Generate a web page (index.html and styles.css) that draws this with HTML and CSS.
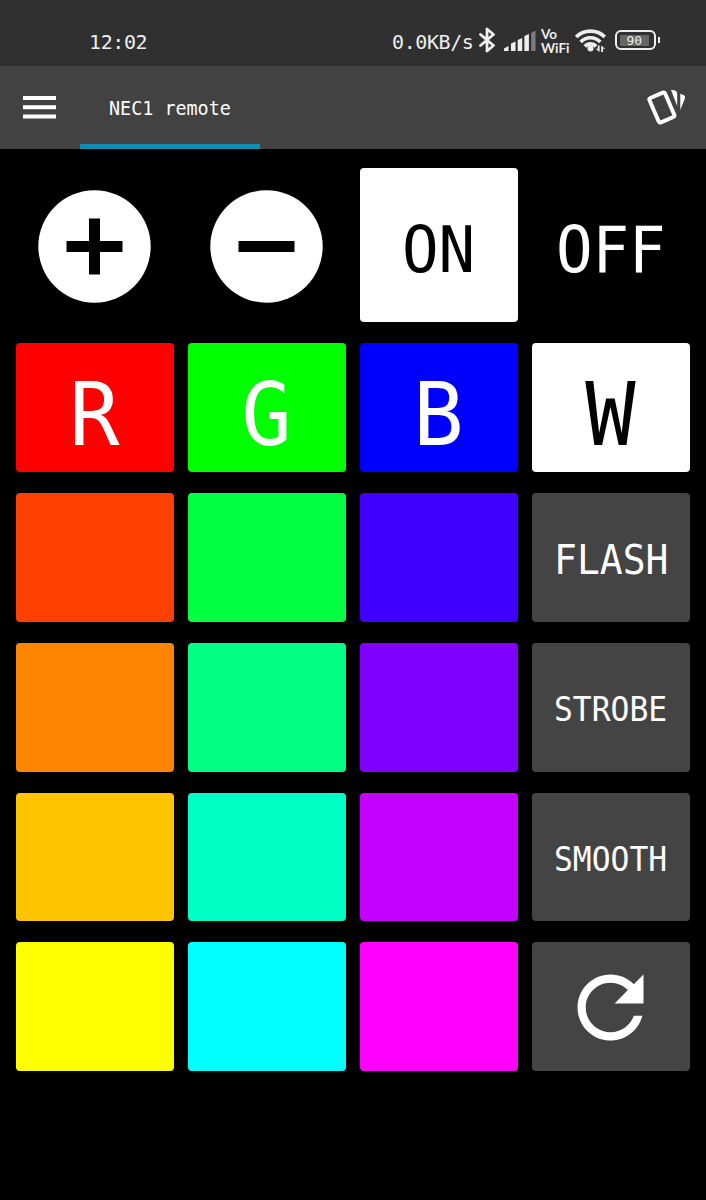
FILE: index.html
```html
<!DOCTYPE html>
<html lang="en">
<head>
    <meta charset="UTF-8">
    <meta name="viewport" content="width=device-width, initial-scale=1.0">
    <title>NEC1 remote</title>
    <link rel="stylesheet" href="styles.css">
</head>
<body>
    <div class="status-bar">
        <span class="clock">12:02</span>
        <div class="status-icons">
            <span class="speed">0.0KB/s</span>
            <svg class="bluetooth" width="18" height="26" viewBox="0 0 18 26">
                <path d="M1.5 7.5L14.500 18.500L8 24V2L14.500 7.500L1.500 18.500" fill="none" stroke="#eee" stroke-width="2.8" stroke-linecap="round" stroke-linejoin="round"/>
            </svg>
            <svg class="signal" width="32" height="20" viewBox="0 0 32 20">
                <path d="M0 20v-2.500l4.500-2.500v5zM7 20v-7.500l4.500-2v9.500zM13.700 20v-11l4.500-2v13zM20.400 20v-15l4.500-2v17z" fill="#eee"/>
                <path d="M27.200 20v-18l3-2h1.300v20z" fill="#7c7c7c"/>
            </svg>
            <div class="vowifi"><span>Vo</span><span>WiFi</span></div>
            <svg class="wifi" width="31" height="23" viewBox="0 0 31 23">
                <g fill="none" stroke="#eee" stroke-width="3.700">
                    <path d="M1.200 8C9 0.200 22 0.200 29.800 8"/>
                    <path d="M5.700 13C11 7.300 20 7.300 25.300 13"/>
                    <path d="M10 17.500C13 14 18 14 21 17.500"/>
                </g>
                <circle cx="15.500" cy="19.400" r="3" fill="#eee"/>
                <path d="M24.600 16.500v6.500l-4-3.200h2.200v-3.300zM26.200 23v-6.500l4 3.200h-2.200v3.300z" fill="#eee"/>
            </svg>
            <div class="battery"><span class="battery-level">90</span></div>
        </div>
    </div>

    <div class="app-bar">
        <svg class="menu" width="33" height="24" viewBox="0 0 33 24">
            <path d="M0 1h33v4H0zM0 10.200h33v4H0zM0 19.500h33v4H0z" fill="#fff"/>
        </svg>
        <div class="tab"><span class="tab-label">NEC1 remote</span></div>
        <svg class="cards" width="40" height="36" viewBox="0 0 40 36">
            <rect x="6.400" y="4.200" width="17" height="26.600" rx="1.800" transform="rotate(-23.500 14.900 17.500)" fill="none" stroke="#fff" stroke-width="3.900"/>
            <path d="M24 0h2.200q4 0.500 4 4v12zM33.300 3.700l3.700 1.600q1.500 1 1 3L33.300 20z" fill="#fff"/>
        </svg>
    </div>

    <div class="remote">
        <div class="key round">
            <svg width="113" height="113" viewBox="0 0 113 113">
                <circle cx="56.500" cy="56.500" r="56.200" fill="#fff"/>
                <path d="M51 28.500h11v22.500h22.500v11H62v22.500H51V62H28.500V51H51z" fill="#000"/>
            </svg>
        </div>
        <div class="key round">
            <svg width="113" height="113" viewBox="0 0 113 113">
                <circle cx="56.500" cy="56.500" r="56.200" fill="#fff"/>
                <path d="M28.500 51h56v11h-56z" fill="#000"/>
            </svg>
        </div>
        <div class="key white"><span class="label medium">ON</span></div>
        <div class="key"><span class="label medium">OFF</span></div>

        <div class="key red"><span class="label large">R</span></div>
        <div class="key green"><span class="label large">G</span></div>
        <div class="key blue"><span class="label large">B</span></div>
        <div class="key white"><span class="label large">W</span></div>

        <div class="key vermilion"></div>
        <div class="key emerald"></div>
        <div class="key indigo"></div>
        <div class="key gray"><span class="label small">FLASH</span></div>

        <div class="key orange"></div>
        <div class="key spring"></div>
        <div class="key violet"></div>
        <div class="key gray"><span class="label tiny">STROBE</span></div>

        <div class="key amber"></div>
        <div class="key turquoise"></div>
        <div class="key purple"></div>
        <div class="key gray"><span class="label tiny">SMOOTH</span></div>

        <div class="key yellow"></div>
        <div class="key cyan"></div>
        <div class="key magenta"></div>
        <div class="key gray refresh">
            <svg width="99" height="99" viewBox="0 0 24 24">
                <path d="M17.650 6.350C16.200 4.900 14.210 4 12 4c-4.420 0-7.990 3.580-7.990 8s3.570 8 7.990 8c3.730 0 6.840-2.550 7.730-6h-2.080c-.82 2.330-3.040 4-5.650 4-3.310 0-6-2.690-6-6s2.690-6 6-6c1.660 0 3.140.69 4.220 1.780L13 11h7V4l-2.350 2.350z" fill="#fff"/>
            </svg>
        </div>
    </div>
</body>
</html>
```

FILE: styles.css
```css
* {
    box-sizing: border-box;
}

body {
    margin: 0;
    height: 1200px;
    background-color: #000;
    color: #fff;
    font-family: "DejaVu Sans Mono", monospace;
    overflow: hidden;
}

svg {
    display: block;
    flex-shrink: 0;
}

.status-bar {
    display: flex;
    justify-content: space-between;
    height: 65.5px;
    padding: 17px 46px 0 89px;
    background-color: #303030;
    color: #eee;
    font-size: 20px;
    line-height: 50px;
}

.clock {
    letter-spacing: -0.4px;
}

.status-icons {
    display: flex;
    align-items: flex-start;
}

.speed {
    width: 87px;
    letter-spacing: -0.4px;
    white-space: nowrap;
}

.bluetooth {
    margin-top: 10px;
}

.signal {
    margin: 14px 0 0 7px;
}

.vowifi {
    display: flex;
    flex-direction: column;
    width: 28px;
    margin: 9.5px 0 0 5px;
    font-family: Lato, sans-serif;
    font-size: 13.5px;
    font-weight: bold;
    line-height: 14px;
}

.vowifi span {
    height: 14px;
}

.wifi {
    margin: 12px 0 0 6px;
}

.battery {
    position: relative;
    width: 41px;
    height: 20px;
    margin: 13px 4px 0 9px;
    padding: 2.5px;
    border: 2.5px solid #eee;
    border-radius: 6px;
}

.battery::after {
    content: "";
    position: absolute;
    top: 5px;
    right: -6px;
    width: 2px;
    height: 6px;
    background-color: #eee;
}

.battery-level {
    display: block;
    width: 29px;
    height: 11px;
    padding-left: 7px;
    background-color: #666;
    font-size: 13px;
    line-height: 12px;
}

.app-bar {
    display: flex;
    height: 83px;
    padding: 0 19px 0 23.5px;
    background-color: #424242;
}

.menu {
    margin: 29.5px 0 0 -0.5px;
}

.tab {
    width: 180px;
    margin-left: 23.5px;
    padding-left: 29px;
    border-bottom: 5.5px solid #0c90ae;
    font-size: 20px;
    line-height: 84px;
}

.tab-label {
    display: block;
    transform: scaleX(0.92);
    transform-origin: left;
    white-space: nowrap;
}

.cards {
    margin: 24.5px 0 0 auto;
}

.remote {
    display: grid;
    grid-template-columns: repeat(4, 1fr);
    grid-template-rows: 154px repeat(5, 128.8px);
    gap: 21px 14.3px;
    padding: 19.7px 16.3px 0 15.9px;
}

.key {
    display: flex;
    align-items: center;
    justify-content: center;
    border-radius: 4px;
}

.round {
    padding-top: 3px;
}

.refresh {
    padding-top: 2px;
}

/* DejaVu is a bit wide for the keys */
.label {
    padding-top: 0.14em;
    line-height: 1;
    transform: scaleX(0.95);
}

.large {
    padding-top: 0.16em;
    font-size: 88px;
}

.medium {
    font-size: 64px;
}

.small {
    font-size: 40px;
}

.tiny {
    font-size: 33px;
}

.white {
    background-color: #fff;
    color: #000;
}

.gray {
    background-color: #444;
}

.red {
    background-color: #ff0000;
}

.green {
    background-color: #00ff00;
}

.blue {
    background-color: #0000ff;
}

.vermilion {
    background-color: #ff4000;
}

.emerald {
    background-color: #00ff40;
}

.indigo {
    background-color: #4000ff;
}

.orange {
    background-color: #ff8400;
}

.spring {
    background-color: #00ff84;
}

.violet {
    background-color: #8000ff;
}

.amber {
    background-color: #ffc400;
}

.turquoise {
    background-color: #00ffc4;
}

.purple {
    background-color: #c400ff;
}

.yellow {
    background-color: #ffff00;
}

.cyan {
    background-color: #00ffff;
}

.magenta {
    background-color: #ff00ff;
}
```
